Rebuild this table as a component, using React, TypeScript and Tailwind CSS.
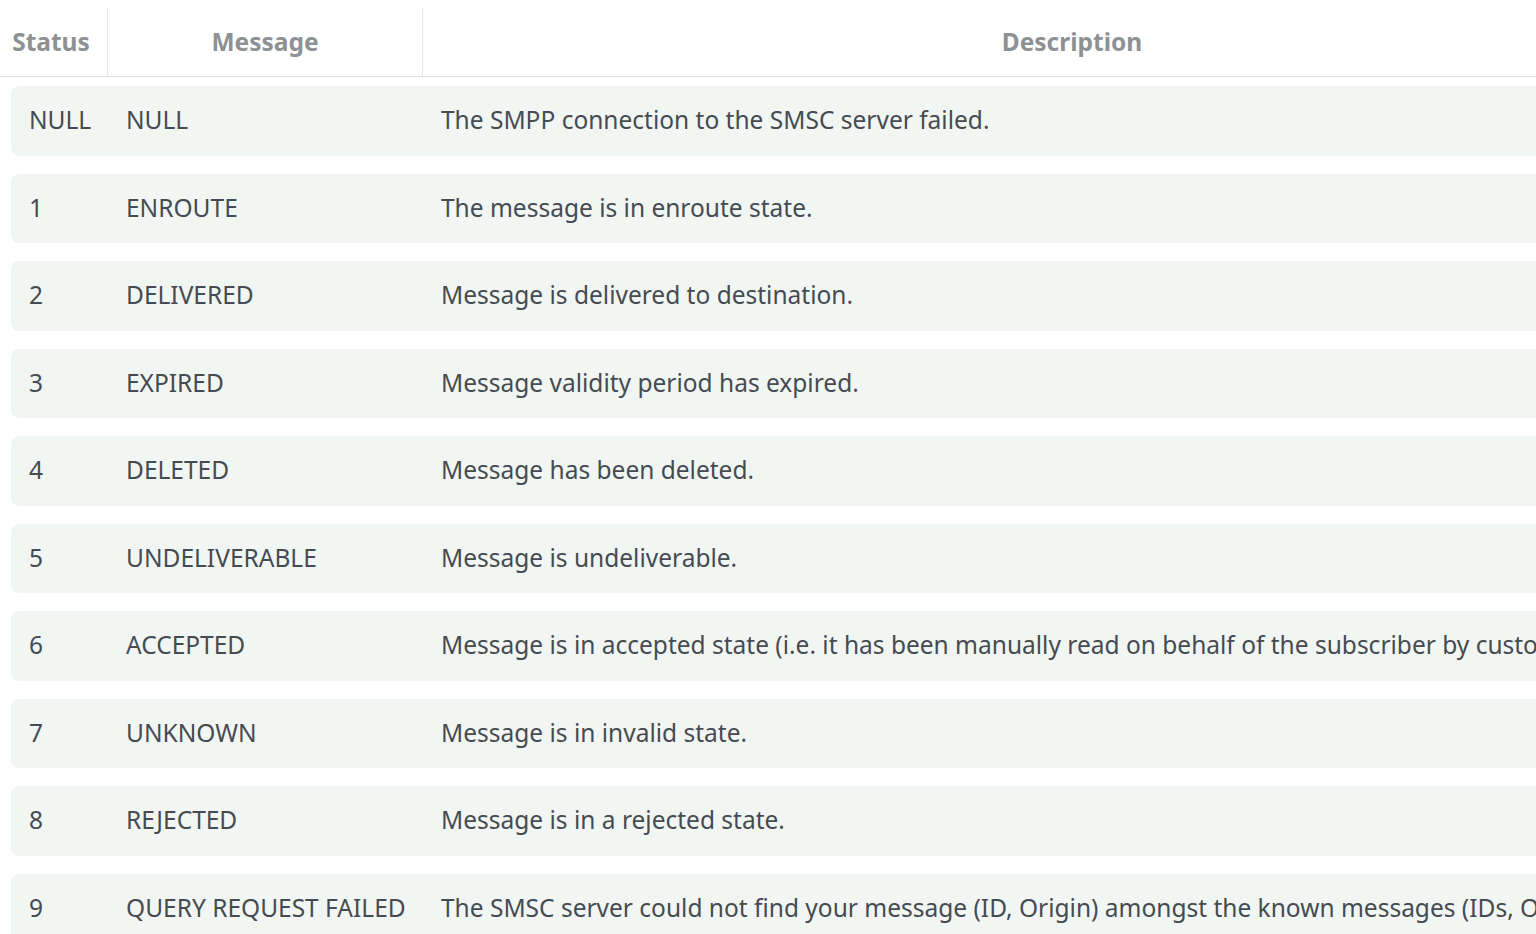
const rows = [
    { status: 'NULL', message: 'NULL', desc: 'The SMPP connection to the SMSC server failed.' },
    { status: '1', message: 'ENROUTE', desc: 'The message is in enroute state.' },
    { status: '2', message: 'DELIVERED', desc: 'Message is delivered to destination.' },
    { status: '3', message: 'EXPIRED', desc: 'Message validity period has expired.' },
    { status: '4', message: 'DELETED', desc: 'Message has been deleted.' },
    { status: '5', message: 'UNDELIVERABLE', desc: 'Message is undeliverable.' },
    {
        status: '6',
        message: 'ACCEPTED',
        desc: 'Message is in accepted state (i.e. it has been manually read on behalf of the subscriber by customer service).',
    },
    { status: '7', message: 'UNKNOWN', desc: 'Message is in invalid state.' },
    { status: '8', message: 'REJECTED', desc: 'Message is in a rejected state.' },
    {
        status: '9',
        message: 'QUERY REQUEST FAILED',
        desc: 'The SMSC server could not find your message (ID, Origin) amongst the known messages (IDs, Origins).',
    },
];

const App = () => {
    return (
        <div className="w-screen h-screen overflow-hidden bg-white font-['Noto_Sans',sans-serif]">
            <div className="w-[1721px]">
                <StatusHeader />
                <div className="pt-[9px]">
                    {rows.map((row) => (
                        <StatusRow key={row.status} {...row} />
                    ))}
                </div>
            </div>
        </div>
    );
};

const StatusHeader = () => {
    return (
        <div className="pt-2 border-b border-[#dfe0e0] grid grid-cols-[108px_315px_1fr] text-[24.5px] font-bold text-[#8e9194]">
            <div className="h-[68px] flex items-center justify-center border-r border-[#e6e7e7] pr-[5px]">Status</div>
            <div className="h-[68px] flex items-center justify-center border-r border-[#e6e7e7]">Message</div>
            <div className="h-[68px] flex items-center justify-center">Description</div>
        </div>
    );
};

const StatusRow = ({ status, message, desc }: { status: string; message: string; desc: string }) => {
    return (
        <div className="ml-[11px] mb-[18px] h-[69.5px] rounded-lg bg-[#f2f6f3] grid grid-cols-[97px_315px_1fr] items-center text-[24.5px] text-[#464b51] whitespace-nowrap">
            <div className="pl-[18px]">{status}</div>
            <div className="pl-[18px]">{message}</div>
            <div className="pl-[18px]">{desc}</div>
        </div>
    );
};

export default App;
